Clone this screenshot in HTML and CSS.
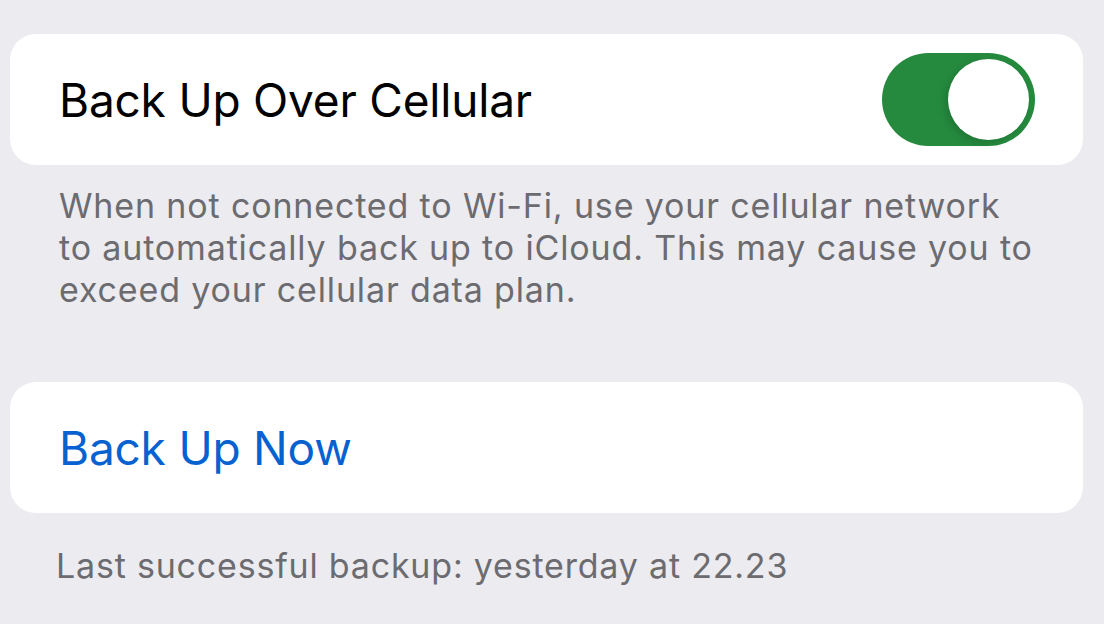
FILE: index.html
```html
<!DOCTYPE html>
<html lang="en">
<head>
<meta charset="utf-8">
<link rel="stylesheet" href="styles.css">
</head>
<body>
<main class="page">
  <section class="group">
    <div class="card row">
      <span class="label">Back Up Over Cellular</span>
      <div class="toggle on" role="switch" aria-checked="true"><span class="knob"></span></div>
    </div>
    <p class="footer">When not connected to Wi-Fi, use your cellular network to automatically back up to iCloud. This may cause you to exceed your cellular data plan.</p>
  </section>
  <section class="group second">
    <div class="card row">
      <span class="label action">Back Up Now</span>
    </div>
    <p class="footer last">Last successful backup: yesterday at 22.23</p>
  </section>
</main>
</body>
</html>
```

FILE: styles.css
```css
html, body {
  margin: 0;
  padding: 0;
  background: #ebebf0;
  font-family: Inter, "Noto Sans", sans-serif;
}
.page {
  width: 1104px;
  height: 624px;
  overflow: hidden;
  padding: 34px 21px 0 10px;
  box-sizing: border-box;
}
.group {
  display: flex;
  flex-direction: column;
}
.second {
  margin-top: 71px;
}
.card {
  background: #ffffff;
  border-radius: 26px;
  height: 131px;
  box-sizing: border-box;
}
.row {
  display: flex;
  align-items: center;
  justify-content: space-between;
  padding: 0 48px 0 49px;
}
.label {
  font-size: 46px;
  color: #000;
  letter-spacing: -0.2px;
}
.action {
  color: #0762d1;
}
.toggle {
  width: 153px;
  height: 93px;
  border-radius: 47px;
  background: #258a3e;
  display: flex;
  align-items: center;
  justify-content: flex-end;
  padding: 0 6px;
  box-sizing: border-box;
}
.knob {
  width: 81px;
  height: 81px;
  border-radius: 50%;
  background: #fff;
  box-shadow: -3px 3px 8px rgba(0,0,0,0.15);
}
.footer {
  margin: 0;
  padding: 20px 43px 0 49px;
  font-size: 34px;
  line-height: 42px;
  letter-spacing: 0.85px;
  color: #6b6b70;
}
.last {
  padding-left: 46px;
  padding-top: 32px;
  letter-spacing: 0.8px;
}
```
